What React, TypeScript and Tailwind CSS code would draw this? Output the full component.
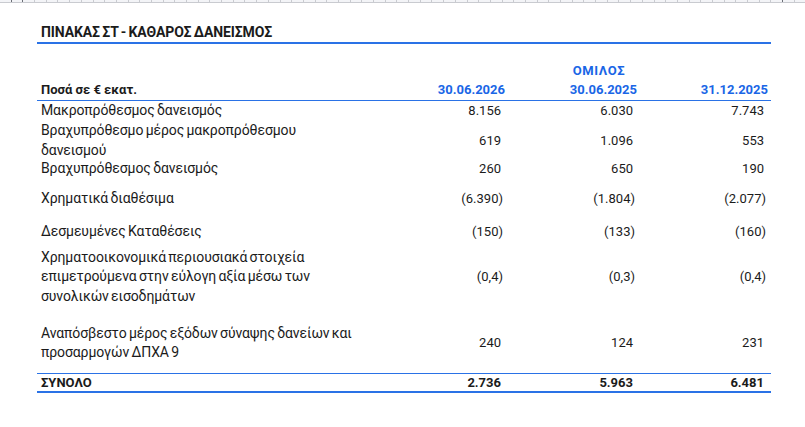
import React from "react";

const blue = "text-[#1a66e6]";

type Row = {
  label: string[];
  values: string[];
  h: string;
  pt?: string;
};

const rows: Row[] = [
  { label: ["Μακροπρόθεσμος δανεισμός"], values: ["8.156", "6.030", "7.743"], h: "h-[20px]" },
  {
    label: ["Βραχυπρόθεσμο μέρος μακροπρόθεσμου", "δανεισμού"],
    values: ["619", "1.096", "553"],
    h: "h-[37px]",
  },
  { label: ["Βραχυπρόθεσμος δανεισμός"], values: ["260", "650", "190"], h: "h-[22px]" },
  { label: ["Χρηματικά διαθέσιμα"], values: ["(6.390)", "(1.804)", "(2.077)"], h: "h-[38px]" },
  { label: ["Δεσμευμένες Καταθέσεις"], values: ["(150)", "(133)", "(160)"], h: "h-[28px]" },
  {
    label: [
      "Χρηματοοικονομικά περιουσιακά στοιχεία",
      "επιμετρούμενα στην εύλογη αξία μέσω των",
      "συνολικών εισοδημάτων",
    ],
    values: ["(0,4)", "(0,3)", "(0,4)"],
    h: "h-[62px]",
  },
  {
    label: ["Αναπόσβεστο μέρος εξόδων σύναψης δανείων και", "προσαρμογών ΔΠΧΑ 9"],
    values: ["240", "124", "231"],
    h: "h-[65px]",
    pt: "pt-[5px]",
  },
];

function Num({ v, bold }: { v: string; bold?: boolean }) {
  const paren = v.startsWith("(");
  return (
    <div
      className={`flex items-center justify-end ${paren ? "pr-[2px]" : "pr-[4px]"} ${
        bold ? "font-bold" : ""
      }`}
    >
      {v}
    </div>
  );
}

export default function App() {
  return (
    <div
      className="w-[805px] h-[427px] bg-white text-[#1b1b1b] overflow-hidden"
      style={{ fontFamily: "Roboto, 'Liberation Sans', sans-serif" }}
    >
      {/* ruler strip */}
      <div className="flex h-[3px] bg-[#f3f4f7] border-b border-[#c9cbd0]">
        {Array.from({ length: 69 }).map((_, i) => (
          <div
            key={i}
            className={`w-[11.7px] shrink-0 border-r ${
              i === 0 || i === 1 || i === 66 ? "border-[#6b6e75]" : "border-[#c9cbd0]"
            }`}
          />
        ))}
      </div>

      <div className="ml-[37px] w-[734px]">
        <div className="pt-[21px] h-[39px] pl-[4px] text-[14px] font-bold [word-spacing:-1px] tracking-[-0.1px] leading-[16px]">
          ΠΙΝΑΚΑΣ ΣΤ - ΚΑΘΑΡΟΣ ΔΑΝΕΙΣΜΟΣ
        </div>
        <div className="h-[2px] bg-[#2a72e6]" />

        <div className="pr-[3px] text-[13px] leading-[19px]">
          <div className="grid grid-cols-[338px_130px_132px_131px] h-[56px] content-end pb-[1px]">
            <div className="col-start-3 flex justify-center pl-[56px] font-bold tracking-[0.6px] leading-[18px]">
              <span className={blue}>ΟΜΙΛΟΣ</span>
            </div>
            <div className="col-start-1 pl-[4px] font-bold">Ποσά σε € εκατ.</div>
            <div className={`text-right font-bold ${blue}`}>30.06.2026</div>
            <div className={`text-right font-bold ${blue}`}>30.06.2025</div>
            <div className={`text-right font-bold ${blue}`}>31.12.2025</div>
          </div>
        </div>
        <div className="h-[1px] bg-[#2a72e6]" />

        <div className="pr-[3px] text-[13px] leading-[19.5px]">
          {rows.map((r, i) => (
            <div key={i} className={`grid grid-cols-[338px_130px_132px_131px] ${r.h} ${r.pt ?? ""}`}>
              <div className="flex flex-col justify-center pl-[4px] text-[14px] [word-spacing:-1px] tracking-[-0.1px]">
                {r.label.map((l, j) => (
                  <div key={j}>{l}</div>
                ))}
              </div>
              {r.values.map((v, j) => (
                <Num key={j} v={v} />
              ))}
            </div>
          ))}
        </div>

        <div className="h-[1px] bg-[#2a72e6]" />
        <div className="pr-[3px] text-[13px] leading-[17px] grid grid-cols-[338px_130px_132px_131px] h-[17px]">
          <div className="pl-[4px] font-bold">ΣΥΝΟΛΟ</div>
          <Num v="2.736" bold />
          <Num v="5.963" bold />
          <Num v="6.481" bold />
        </div>
        <div className="h-[2px] bg-[#2a72e6]" />
      </div>
    </div>
  );
}
